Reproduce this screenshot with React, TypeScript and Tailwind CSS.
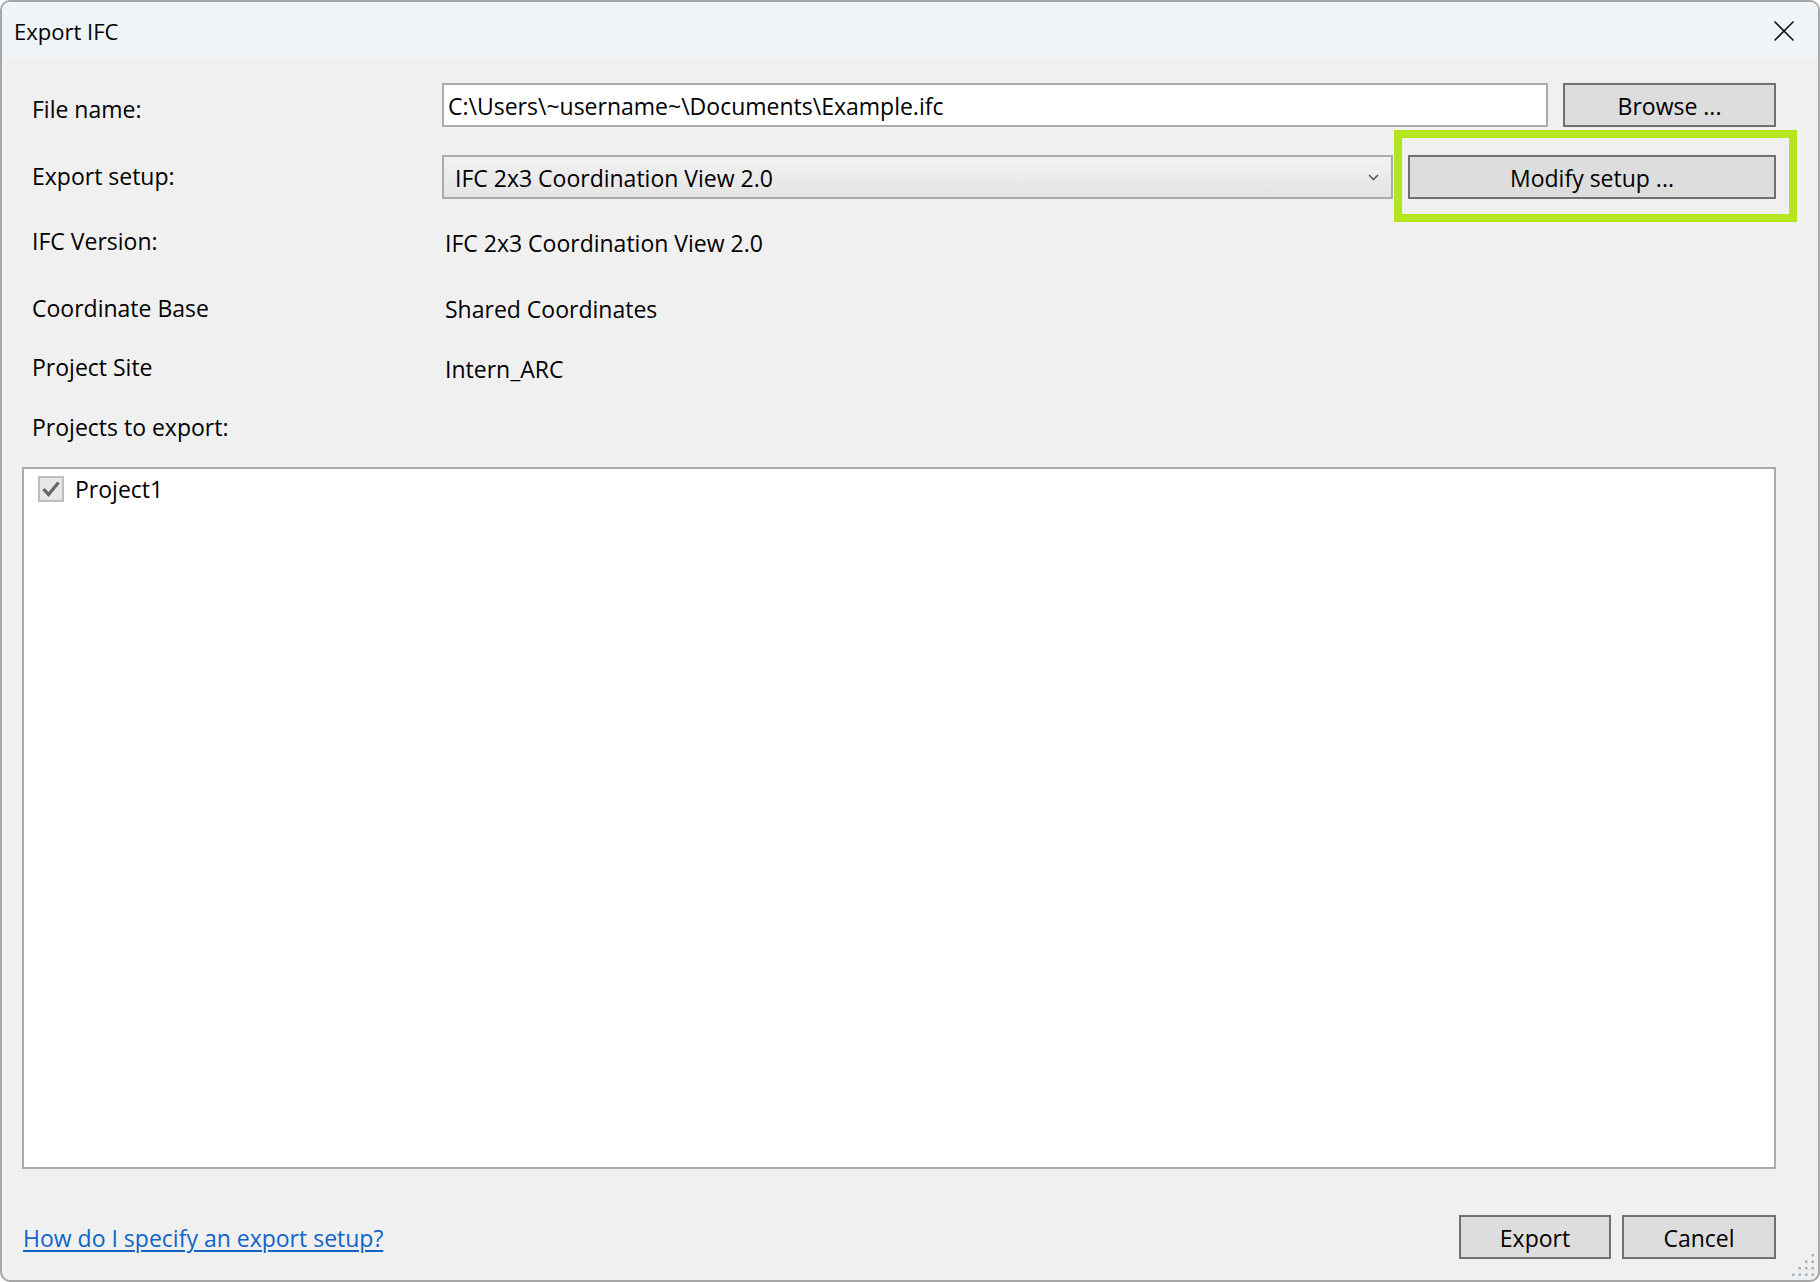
import React from "react";

const font = "font-['Segoe_UI','Open_Sans',sans-serif]";

function Btn({ children, w }: { children: React.ReactNode; w: string }) {
  return (
    <div
      className={`${w} h-[44px] shrink-0 border-2 border-[#707070] bg-[#dddddd] flex items-center justify-center text-[23px] leading-[28px] pt-[2px] text-black`}
    >
      {children}
    </div>
  );
}

function Grip() {
  const dots: [number, number][] = [];
  for (let r = 0; r < 4; r++) {
    for (let c = 3 - r; c < 4; c++) {
      dots.push([c * 6.5, r * 6.5]);
    }
  }
  return (
    <svg width="24" height="24" viewBox="0 0 24 24">
      {dots.map(([x, y], i) => (
        <rect key={i} x={x} y={y} width="2.5" height="2.5" fill="#9fb2c8" />
      ))}
    </svg>
  );
}

export default function App() {
  return (
    <div className={`w-[1820px] h-[1282px] bg-white ${font} text-black`}>
      <div className="relative w-full h-full border-2 border-[#a6a6a6] rounded-[10px] bg-[#f0f0f0] flex flex-col overflow-hidden">
        {/* Title bar */}
        <div className="h-[56px] shrink-0 bg-[#eef4f8] flex items-center justify-between pl-[12px] pr-[23px]">
          <span className="text-[22px] leading-[28px] pt-[1px]">Export IFC</span>
          <svg width="22" height="22" viewBox="0 0 22 22" className="mt-[1px]">
            <path d="M1.5 1.5 L20.5 20.5 M20.5 1.5 L1.5 20.5" stroke="#1a1a1a" strokeWidth="1.6" fill="none" />
          </svg>
        </div>

        {/* Content */}
        <div className="flex-1 flex flex-col text-[23px]">
          {/* File name row */}
          <div className="mt-[25px] flex items-start h-[44px]">
            <div className="w-[440px] shrink-0 pl-[30px] leading-[28px] pt-[12px]">File name:</div>
            <div className="w-[1106px] h-[44px] shrink-0 border-2 border-[#ababab] bg-white flex items-center pl-[4px] pt-[1px] leading-[28px]">
              C:\Users\~username~\Documents\Example.ifc
            </div>
            <div className="w-[15px] shrink-0" />
            <Btn w="w-[213px]">Browse ...</Btn>
          </div>

          {/* Export setup row */}
          <div className="mt-[28px] flex items-start h-[44px]">
            <div className="w-[440px] shrink-0 pl-[30px] leading-[28px] pt-[7px]">Export setup:</div>
            <div className="w-[951px] h-[44px] shrink-0 border-2 border-[#ababab] bg-gradient-to-b from-[#f2f2f2] to-[#e4e4e4] flex items-center justify-between pl-[11px] pr-[12px] leading-[28px]">
              <span className="pt-[2px]">IFC 2x3 Coordination View 2.0</span>
              <svg width="11" height="7" viewBox="0 0 11 7">
                <path d="M1 1 L5.5 5.5 L10 1" stroke="#5a5a5a" strokeWidth="1.6" fill="none" />
              </svg>
            </div>
            <div className="w-[15px] shrink-0" />
            <Btn w="w-[368px]">Modify setup ...</Btn>
          </div>

          {/* Info rows */}
          <div className="mt-[29px] flex h-[28px] leading-[28px]">
            <div className="w-[440px] shrink-0 pl-[30px] -mt-[1px]">IFC Version:</div>
            <div className="pl-[3px] pt-[1px]">IFC 2x3 Coordination View 2.0</div>
          </div>
          <div className="mt-[38px] flex h-[28px] leading-[28px]">
            <div className="w-[440px] shrink-0 pl-[30px]">Coordinate Base</div>
            <div className="pl-[3px] pt-[1px]">Shared Coordinates</div>
          </div>
          <div className="mt-[32px] flex h-[28px] leading-[28px]">
            <div className="w-[440px] shrink-0 pl-[30px] -mt-[1px]">Project Site</div>
            <div className="pl-[3px] pt-[1px]">Intern_ARC</div>
          </div>
          <div className="mt-[32px] flex h-[28px] leading-[28px]">
            <div className="w-[440px] shrink-0 pl-[30px] -mt-[1px]">Projects to export:</div>
          </div>

          {/* List box */}
          <div className="mt-[25px] ml-[20px] w-[1754px] flex-1 border-2 border-[#ababab] bg-white pt-[5px] pl-[14px]">
            <div className="flex items-center gap-[11px] leading-[28px]">
              <div className="w-[26px] h-[26px] border-2 border-[#bdbdbd] bg-[#e7e7e7] flex items-center justify-center">
                <svg width="20" height="20" viewBox="0 0 20 20">
                  <path d="M2.5 10 L7.5 15.5 L17.5 3.5" stroke="#666666" strokeWidth="3.2" fill="none" />
                </svg>
              </div>
              <span className="pt-[1px]">Project1</span>
            </div>
          </div>

          {/* Bottom row */}
          <div className="mt-[46px] mb-[21px] h-[44px] flex items-center">
            <a className="ml-[21px] text-[#1165c9] underline underline-offset-[3px] decoration-[1.5px] leading-[28px] pt-[1px]">
              How do I specify an export setup?
            </a>
            <div className="flex-1" />
            <Btn w="w-[152px]">Export</Btn>
            <div className="w-[11px] shrink-0" />
            <Btn w="w-[154px]">Cancel</Btn>
            <div className="w-[42px] shrink-0" />
          </div>
        </div>

        {/* Highlight annotation */}
        <div className="absolute left-[1392px] top-[128px] w-[403px] h-[92px] border-[8px] border-[#b5e51d] pointer-events-none" />

        {/* Resize grip */}
        <div className="absolute right-[2px] bottom-[2px]">
          <Grip />
        </div>
      </div>
    </div>
  );
}
